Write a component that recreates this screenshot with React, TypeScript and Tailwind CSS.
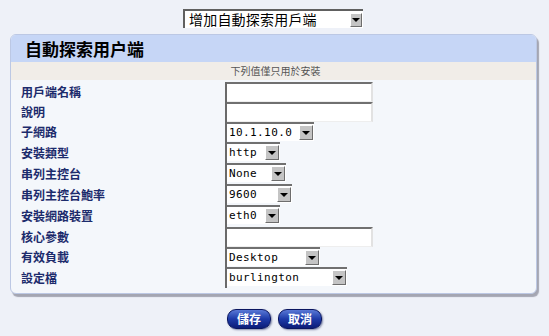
import React from "react";

const cjk = "font-['Noto_Sans_CJK_TC','Noto_Sans_CJK_SC',sans-serif]";
const mono = "font-['DejaVu_Sans_Mono','Liberation_Mono',monospace]";

function Arrow({ cls }: { cls: string }) {
  return (
    <div
      className={`flex items-center justify-center bg-[#c4c4c4] border border-t-white border-l-white border-r-[#6d6d6d] border-b-[#6d6d6d] ${cls}`}
    >
      <div className="w-0 h-0 border-l-[4px] border-r-[4px] border-t-[4px] border-l-transparent border-r-transparent border-t-black" />
    </div>
  );
}

function Sel({ value, w }: { value: string; w: string }) {
  return (
    <div className={`flex items-start bg-white border-t-2 border-[#707070] h-[19px] ${w}`}>
      <span className={`${mono} text-[11px] leading-[17px] text-black pl-[2px] flex-1 tracking-[0.4px]`}>{value}</span>
      <Arrow cls="w-[14px] h-[15px] mt-[1px] mr-[1px]" />
    </div>
  );
}

function TextIn() {
  return (
    <div className="w-[146px] h-[20px] bg-white border-t-2 border-r-2 border-b border-t-[#707070] border-r-[#e2e2e2] border-b-[#eeeeee]" />
  );
}

const rows: { label: string; h: string; el: React.ReactNode }[] = [
  { label: "用戶端名稱", h: "h-[20px]", el: <TextIn /> },
  { label: "說明", h: "h-[20px]", el: <TextIn /> },
  { label: "子網路", h: "h-[20px]", el: <Sel value="10.1.10.0" w="w-[87px]" /> },
  { label: "安裝類型", h: "h-[21px]", el: <Sel value="http" w="w-[53px]" /> },
  { label: "串列主控台", h: "h-[21px]", el: <Sel value="None" w="w-[59px]" /> },
  { label: "串列主控台鮑率", h: "h-[21px]", el: <Sel value="9600" w="w-[65px]" /> },
  { label: "安裝網路裝置", h: "h-[22px]", el: <Sel value="eth0" w="w-[53px]" /> },
  { label: "核心參數", h: "h-[20px]", el: <TextIn /> },
  { label: "有效負載", h: "h-[20px]", el: <Sel value="Desktop" w="w-[93px]" /> },
  { label: "設定檔", h: "h-[21px]", el: <Sel value="burlington" w="w-[120px]" /> },
];

function Btn({ text }: { text: string }) {
  return (
    <div
      className={`${cjk} w-[44px] h-[20px] rounded-[9px] flex items-center justify-center text-white font-bold text-[12px] bg-gradient-to-b from-[#5a78d6] via-[#1e3aa8] to-[#0c1c78] border border-[#0a1660] shadow-[1px_1px_2px_#8088a8]`}
    >
      {text}
    </div>
  );
}

export default function App() {
  return (
    <div className="w-[549px] h-[336px] bg-[#eef1f8] overflow-hidden flex flex-col items-center">
      <div className="mt-[9px] w-[180px] h-[19px] bg-white border-t-2 border-l-2 border-[#606060] flex items-center mr-[3px]">
        <span className={`${cjk} flex-1 text-[14px] leading-[17px] text-black pl-[4px] tracking-[0.2px]`}>
          增加自動探索用戶端
        </span>
        <Arrow cls="w-[12px] h-[14px] mr-[1px]" />
      </div>

      <div className="mt-[6px] self-start ml-[10px] w-[527px] rounded-[6px] border border-[#bcc8e4] bg-[#f4f7fb] shadow-[2px_3px_1px_#a4a6b2] overflow-hidden">
        <div className="h-[27px] bg-[#c6d6f6] flex items-center pl-[14px]">
          <span className={`${cjk} font-bold text-[17px] leading-[20px] text-black`}>自動探索用户端</span>
        </div>
        <div className="h-[18px] bg-[#f1ede8] flex items-center justify-center pl-[4px]">
          <span className={`${cjk} text-[10px] leading-[12px] text-[#555]`}>下列值僅只用於安裝</span>
        </div>
        <div className="pt-[2px] pb-[5px]">
          {rows.map((r, i) => (
            <div key={i} className={`flex ${r.h}`}>
              <div className={`w-[214px] pl-[10px] flex items-center ${cjk} font-bold text-[12px] text-[#1c2b6c]`}>
                {r.label}
              </div>
              <div className="border-l-2 border-[#6a6a6a] flex items-start">{r.el}</div>
            </div>
          ))}
        </div>
      </div>

      <div className="mt-[15px] flex gap-[7px]">
        <Btn text="儲存" />
        <Btn text="取消" />
      </div>
    </div>
  );
}
